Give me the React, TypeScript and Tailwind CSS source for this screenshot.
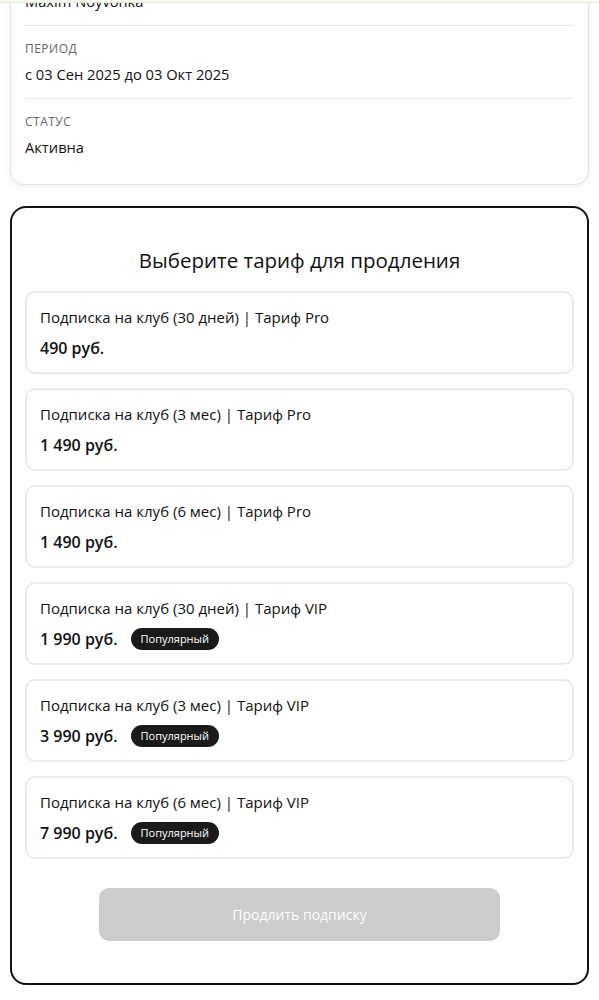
const plans = [
  { title: 'Подписка на клуб (30 дней) | Тариф Pro', price: '490 руб.', popular: false },
  { title: 'Подписка на клуб (3 мес) | Тариф Pro', price: '1 490 руб.', popular: false },
  { title: 'Подписка на клуб (6 мес) | Тариф Pro', price: '1 490 руб.', popular: false },
  { title: 'Подписка на клуб (30 дней) | Тариф VIP', price: '1 990 руб.', popular: true },
  { title: 'Подписка на клуб (3 мес) | Тариф VIP', price: '3 990 руб.', popular: true },
  { title: 'Подписка на клуб (6 мес) | Тариф VIP', price: '7 990 руб.', popular: true },
];

const details = [
  { label: 'Имя', value: 'Maxim Noyvonka' },
  { label: 'Период', value: 'с 03 Сен 2025 до 03 Окт 2025' },
  { label: 'Статус', value: 'Активна' },
];

export default function App() {
  return (
    <div className="relative min-h-screen overflow-hidden bg-white font-['Open_Sans',sans-serif] text-[#111]">
      <div className="absolute inset-x-0 top-0 z-10 h-[3px] border-b border-[#e4edd6] bg-[#f8fbf2]" />

      <div className="px-[10px] pb-6">
        <div className="-mt-[54px] rounded-[14px] border border-[#e2e2e2] bg-white px-[14px] pb-[26px] pt-5 shadow-[0_2px_6px_rgba(0,0,0,0.06)]">
          {details.map((d, i) => (
            <div
              key={d.label}
              className={`flex flex-col gap-[5px] ${i > 0 ? 'border-t border-[#e6e6e6] pt-[14px]' : ''} ${i < details.length - 1 ? 'pb-[13px]' : ''}`}
            >
              <div className="text-[12px] uppercase leading-[18px] tracking-[0.04em] text-[#666]">{d.label}</div>
              <div className="text-[14.7px] leading-[22px]">{d.value}</div>
            </div>
          ))}
        </div>

        <div className="mt-[21px] rounded-[16px] border-2 border-[#111] bg-white px-[13px] pb-[42px] pt-[38px]">
          <h2 className="text-center text-[20.5px] leading-[28px]">Выберите тариф для продления</h2>

          <div className="mt-[17px] flex flex-col gap-[14px]">
            {plans.map((p, i) => (
              <div key={i} className="flex h-[83px] flex-col rounded-[10px] border-2 border-[#ebebeb] bg-white px-[13px] pt-[14px]">
                <div className="text-[15px] leading-[20px]">{p.title}</div>
                <div className="mt-[9px] flex items-center gap-[13px]">
                  <span className="text-[16px] font-semibold leading-[24px]">{p.price}</span>
                  {p.popular && (
                    <span className="flex h-[22px] items-center rounded-full bg-[#1a1a1a] px-[10px] text-[11px] text-white">
                      Популярный
                    </span>
                  )}
                </div>
              </div>
            ))}
          </div>

          <div className="mt-[29px] flex justify-center">
            <button
              disabled
              className="h-[53px] w-[401px] rounded-[10px] bg-[#cccccc] text-[14px] text-white"
            >
              Продлить подписку
            </button>
          </div>
        </div>
      </div>
    </div>
  );
}
